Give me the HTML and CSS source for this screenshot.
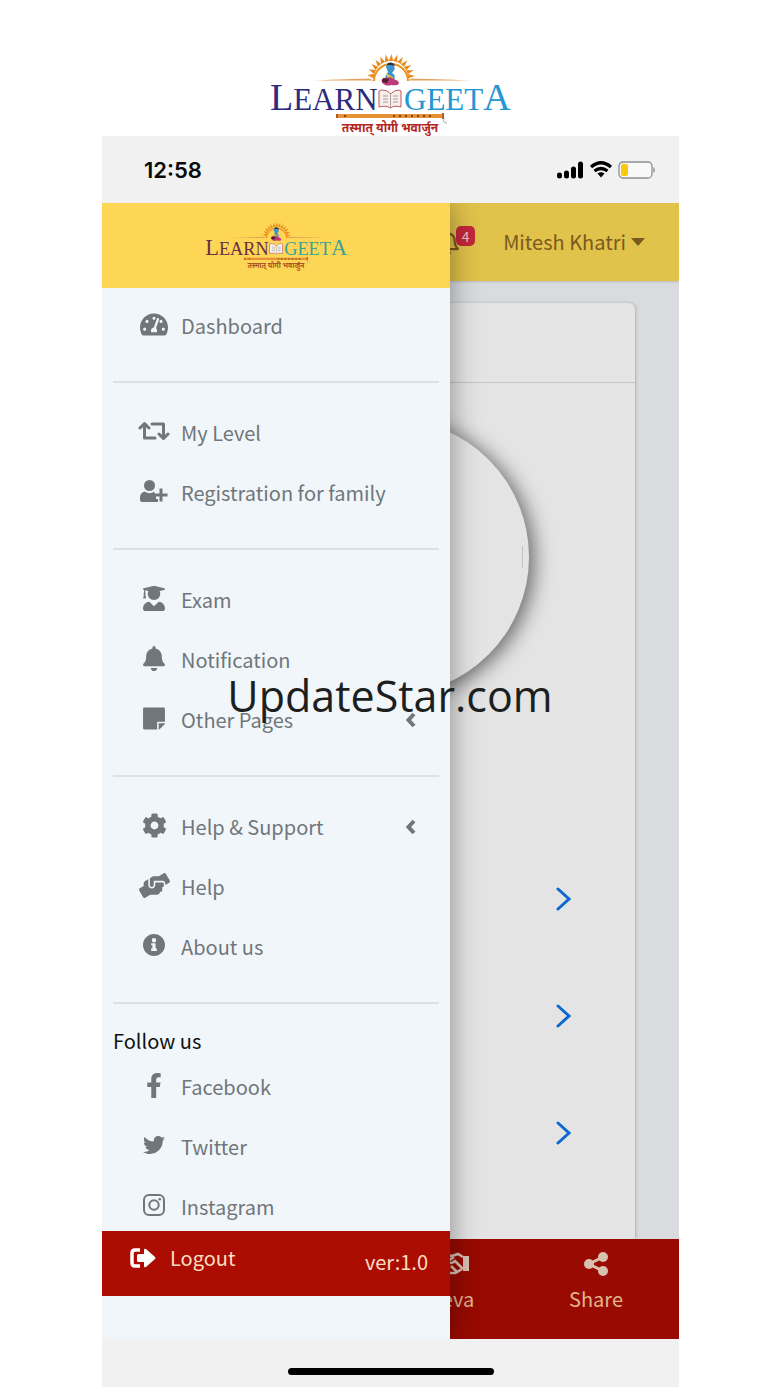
FILE: index.html
```html
<!DOCTYPE html>
<html lang="en">
<head>
<meta charset="utf-8">
<meta name="viewport" content="width=device-width, initial-scale=1">
<title>Learn Geeta</title>
<link rel="stylesheet" href="styles.css">
</head>
<body>
<svg class="defs" aria-hidden="true">
  <symbol id="logo" viewBox="0 0 260 95">
    <path d="M52 35.500Q90 34 109 33.500L114 35.500ZM214 35.500Q170 34 152 33.500L147 35.500Z" fill="#e5a05a"/>
    <g fill="#ea8a1e" transform="translate(131 33)">
      <path id="ray" d="M-2.200 -17L0.600 -24L2.200 -17Z"/>
      <use href="#ray" transform="rotate(-84)"/><use href="#ray" transform="rotate(-70)"/><use href="#ray" transform="rotate(-56)"/><use href="#ray" transform="rotate(-42)"/><use href="#ray" transform="rotate(-28)"/><use href="#ray" transform="rotate(-14)"/>
      <use href="#ray" transform="rotate(14)"/><use href="#ray" transform="rotate(28)"/><use href="#ray" transform="rotate(42)"/><use href="#ray" transform="rotate(56)"/><use href="#ray" transform="rotate(70)"/><use href="#ray" transform="rotate(84)"/>
      <path d="M-17 3A17 17 0 1 1 17 3" fill="none" stroke="#ee931f" stroke-width="2"/>
    </g>
    <path d="M126 22C126 18 132 17 134 21C136 25 133 26 132 28C136 30 135 34 133 37H125C124 32 127 29 128 27Z" fill="#3f93c9"/>
    <path d="M127 20C128 16 134 17 135 21L131 20Z" fill="#252f49"/>
    <path d="M126 28L134 33L128 35Z" fill="#e6c93f"/>
    <path d="M122 34L130 32L138 36C141 40 136 41 131 40C126 42 120 38 122 34Z" fill="#bf3a7a"/>
    <path d="M123 33L129 34L127 38L122 37Z" fill="#521d2d"/>
    <path d="M119 46L121 45Q128 45 130.500 49Q134 45 139 45L141 46V62Q134 60 130.500 63Q126 60 119 62Z" fill="#f5f1ea" stroke="#c25562" stroke-width="1"/>
    <path d="M130.500 49V62M123 51H128M123 54H128M123 57H128M133 51H138M133 54H138M133 57H138" stroke="#a99b9b" stroke-width="1"/>
    <text class="logo-learn" x="10" y="65"><tspan class="logo-big">L</tspan>EARN</text>
    <text class="logo-geeta" x="144" y="65">GEET<tspan class="logo-big">A</tspan></text>
    <path d="M76 69H184V73H76Z" fill="#e79335"/>
    <path d="M76 69H78V73H76ZM182 68H184V74H182Z" fill="#a65c22"/>
    <path d="M84 71H86M133 71H174" stroke="#81451e" stroke-width="2" stroke-dasharray="2 4"/>
    <path d="M184 73Q182 78 187 78" fill="none" stroke="#aaa" stroke-width="1"/>
    <text class="logo-tag" x="130" y="87" text-anchor="middle">तस्मात् योगी भवार्जुन</text>
  </symbol>
</svg>

<div class="page">
  <header class="masthead">
    <svg class="logo logo-main" role="img" aria-label="Learn Geeta"><use href="#logo"/></svg>
  </header>

  <div class="phone">
    <div class="status">
      <span class="clock">12:58</span>
      <span class="signals">
        <svg width="27" height="18" viewBox="0 0 27 18"><path d="M2.500 14V15M9.500 12V15M16.500 8V15M23.500 3V15" stroke="#000" stroke-width="5" stroke-linecap="round"/></svg>
        <svg width="22" height="17" viewBox="0 0 22 17" fill="none" stroke="#000" stroke-width="3.300"><path d="M1 6Q11-2.500 21 6M4.500 10Q11 5 17.500 10"/><path d="M7.500 12.500Q11 10 14.500 12.500L11 16.500Z" fill="#000" stroke="none"/></svg>
        <svg width="38" height="18" viewBox="0 0 38 18"><rect x="1" y="1" width="33" height="16" rx="4" fill="#f8f8f8" stroke="#8f8f93" stroke-width="1.300"/><rect x="3" y="3" width="7" height="12" rx="2" fill="#f8c90d"/><path d="M35.500 6Q38 9 35.500 12Z" fill="#77777b"/></svg>
      </span>
    </div>

    <div class="stage">
      <main class="app">
        <div class="topbar">
          <button class="alerts" aria-label="Notifications">
            <svg width="22" height="25" viewBox="0 0 448 512" fill="currentColor"><path d="M439.400 362.300c-19.300-20.800-55.500-52-55.500-154.300 0-77.700-54.500-139.900-127.900-155.200V32a32 32 0 1 0-64 0v20.800C118.600 68.100 64.100 130.300 64.100 208c0 102.300-36.200 133.500-55.500 154.300C2.600 368.700 0 376.400 0 384c.1 16.400 13 32 32.100 32h383.800c19.100 0 32-15.600 32.100-32 0-7.600-2.600-15.300-8.600-21.700zM67.500 368c21.200-28 44.400-74.300 44.500-159.400V208c0-61.900 50.100-112 112-112s112 50.100 112 112v.6c.1 85.100 23.300 131.500 44.500 159.400H67.500zM224 512c35.300 0 64-28.700 64-64H160c0 35.300 28.600 64 64 64z"/></svg>
            <span class="badge">4</span>
          </button>
          <button class="user">Mitesh Khatri <span class="caret"></span></button>
        </div>
        <section class="card">
          <div class="card-head"></div>
          <div class="disc"><span class="disc-mark"></span></div>
          <a class="row" href="#" aria-label="Open"><svg width="16" height="24" viewBox="0 0 16 24"><path d="M2 2L13 12L2 22"/></svg></a>
          <a class="row" href="#" aria-label="Open"><svg width="16" height="24" viewBox="0 0 16 24"><path d="M2 2L13 12L2 22"/></svg></a>
          <a class="row" href="#" aria-label="Open"><svg width="16" height="24" viewBox="0 0 16 24"><path d="M2 2L13 12L2 22"/></svg></a>
        </section>
        <nav class="tabs">
          <a class="tab" href="#"><svg width="34" height="24" viewBox="0 0 34 24" fill="none" stroke="currentColor" stroke-width="2.600"><path d="M1 3H6V18H1M6 5L12 3L17 4L23 2L28 5M19 5L13 9Q15 13 20 9L28 17M6 17L14 21H20L23 19M16 14L22 20L27 17"/><path d="M28 4H34V19H28Z" fill="currentColor" stroke="none"/></svg><span>Seva</span></a>
          <a class="tab" href="#"><svg width="24" height="24" viewBox="0 0 24 24"><path d="M19 5L5 12L19 19" fill="none" stroke="currentColor" stroke-width="3"/><g fill="currentColor"><circle cx="19" cy="5" r="5"/><circle cx="5" cy="12" r="5"/><circle cx="19" cy="19" r="5"/></g></svg><span>Share</span></a>
        </nav>
      </main>

      <aside class="drawer">
        <div class="brand"><svg class="logo logo-small" role="img" aria-label="Learn Geeta"><use href="#logo"/></svg></div>
        <nav class="menu">
          <ul class="group">
            <li><a class="item" href="#"><span class="ico"><svg width="28" height="25" viewBox="0 0 576 512"><path fill-rule="evenodd" d="M288 32C128.900 32 0 160.900 0 320c0 52.800 14.300 102.300 39 144.800 5.600 9.600 16.300 15.200 27.400 15.200h443.200c11.100 0 21.800-5.600 27.400-15.200 24.700-42.500 39-92 39-144.800 0-159.100-128.900-288-288-288zm0 64a32 32 0 1 1 0 64 32 32 0 0 1 0-64zM96 384a32 32 0 1 1 0-64 32 32 0 0 1 0 64zm48-160a32 32 0 1 1 0-64 32 32 0 0 1 0 64zm246.800-72.400l-61.300 184c13.300 11.500 22.500 27.600 22.500 46.400 0 12-4 22-9 34H233c-5-10-9-22-9-34 0-34.300 27.200-62 61.200-63.700l61.300-182c4.200-12.600 17.800-19.400 30.400-15.200s18.100 17.900 13.900 30.500zM432 160a32 32 0 1 1 0 64 32 32 0 0 1 0-64zm48 224a32 32 0 1 1 0-64 32 32 0 0 1 0 64z"/></svg></span>Dashboard</a></li>
          </ul>
          <ul class="group">
            <li><a class="item" href="#"><span class="ico"><svg width="32" height="20" viewBox="0 0 32 20" fill="none" stroke="currentColor" stroke-width="3" stroke-linecap="round" stroke-linejoin="round"><path d="M2 7L6.500 2.500L11 7M6.500 3V17H17M21 13L25.500 17.500L30 13M25.500 17V3H14"/></svg></span>My Level</a></li>
            <li><a class="item" href="#"><span class="ico"><svg width="28" height="23" viewBox="0 0 28 23"><circle cx="9.500" cy="5.500" r="5.500"/><path d="M4.500 11.500Q9.500 15 14.500 11.500V15H16V19H18V22H2Q0 22 0 20V17Q0 13 4.500 11.500ZM19.500 8.500H22.500V13.500H27.500V16.500H22.500V21.500H19.500V16.500H14.500V13.500H19.500Z"/></svg></span>Registration for family</a></li>
          </ul>
          <ul class="group">
            <li><a class="item" href="#"><span class="ico"><svg width="22" height="25" viewBox="0 0 448 512"><path d="M319.400 320.600L224 416l-95.400-95.400C57.100 323.700 0 382.200 0 454.400v9.600c0 26.500 21.500 48 48 48h352c26.500 0 48-21.500 48-48v-9.600c0-72.200-57.100-130.700-128.600-133.800zM13.600 79.800l6.400 1.500v58.400c-7 4.200-12 11.500-12 20.300 0 8.400 4.600 15.400 11.100 19.700L3.500 242c-1.700 6.900 2.100 14 7.600 14h41.800c5.500 0 9.300-7.100 7.600-14l-15.600-62.300C51.400 175.400 56 168.400 56 160c0-8.800-5-16.100-12-20.300V87.100l66 15.900c-8.600 17.200-14 36.400-14 57 0 70.700 57.300 128 128 128s128-57.300 128-128c0-20.600-5.300-39.800-14-57l96.300-23.200c18.200-4.400 18.200-27.100 0-31.500l-190.400-46c-13-3.100-26.700-3.100-39.700 0L13.600 48.200c-18.100 4.400-18.100 27.200 0 31.600z"/></svg></span>Exam</a></li>
            <li><a class="item" href="#"><span class="ico"><svg width="22" height="25" viewBox="0 0 448 512"><path d="M224 512c35.300 0 64-28.700 64-64H160c0 35.300 28.600 64 64 64zm215.400-149.700c-19.300-20.800-55.500-52-55.500-154.300 0-77.700-54.500-139.900-127.900-155.200V32a32 32 0 1 0-64 0v20.800C118.600 68.100 64.100 130.300 64.100 208c0 102.300-36.200 133.500-55.500 154.300C2.600 368.700 0 376.400 0 384c.1 16.400 13 32 32.100 32h383.800c19.100 0 32-15.600 32.100-32 0-7.600-2.600-15.300-8.600-21.700z"/></svg></span>Notification</a></li>
            <li><a class="item" href="#"><span class="ico"><svg width="22" height="25" viewBox="0 0 448 512"><path d="M312 320h136V56c0-13.300-10.700-24-24-24H24C10.700 32 0 42.700 0 56v400c0 13.300 10.700 24 24 24h264V344c0-13.200 10.800-24 24-24zm129 55l-98 98c-4.500 4.500-10.600 7-17 7h-6V352h128v6.100c0 6.300-2.500 12.400-7 16.900z"/></svg></span>Other Pages<svg class="more" width="10" height="16" viewBox="0 0 10 16"><path d="M8 2L2.500 8L8 14"/></svg></a></li>
          </ul>
          <ul class="group">
            <li><a class="item" href="#"><span class="ico"><svg width="25" height="25" viewBox="0 0 512 512"><path d="M487.400 315.700l-42.600-24.600c4.300-23.200 4.300-47 0-70.200l42.600-24.600c4.900-2.800 7.100-8.600 5.500-14-11.100-35.600-30-67.800-54.700-94.600-3.800-4.100-10-5.100-14.800-2.300L380.800 110c-17.900-15.400-38.500-27.300-60.800-35.100V25.800c0-5.600-3.900-10.500-9.400-11.700-36.700-8.200-74.300-7.800-109.200 0-5.500 1.200-9.400 6.100-9.400 11.700V75c-22.200 7.900-42.800 19.800-60.800 35.100L88.700 85.500c-4.900-2.800-11-1.900-14.800 2.300-24.700 26.700-43.600 58.900-54.700 94.600-1.700 5.400.6 11.200 5.500 14L67.300 221c-4.300 23.200-4.300 47 0 70.200l-42.600 24.600c-4.900 2.800-7.100 8.600-5.500 14 11.100 35.600 30 67.800 54.700 94.600 3.800 4.100 10 5.100 14.800 2.300l42.600-24.600c17.900 15.400 38.500 27.300 60.800 35.100v49.200c0 5.600 3.900 10.500 9.400 11.700 36.700 8.200 74.300 7.800 109.200 0 5.500-1.200 9.400-6.100 9.400-11.700v-49.200c22.200-7.900 42.800-19.800 60.800-35.100l42.600 24.600c4.900 2.800 11 1.900 14.800-2.300 24.700-26.700 43.600-58.900 54.700-94.600 1.500-5.500-.7-11.300-5.600-14.100zM256 336c-44.100 0-80-35.900-80-80s35.900-80 80-80 80 35.900 80 80-35.900 80-80 80z"/></svg></span>Help &amp; Support<svg class="more" width="10" height="16" viewBox="0 0 10 16"><path d="M8 2L2.500 8L8 14"/></svg></a></li>
            <li><a class="item" href="#"><span class="ico"><svg width="31" height="25" viewBox="0 0 640 512"><path d="M488 192H336v56c0 39.700-32.300 72-72 72s-72-32.300-72-72V126.400l-64.900 39C107.800 176.900 96 197.800 96 220.200v47.300l-80 46.200C.7 322.500-4.600 342.100 4.300 357.400l80 138.600c8.800 15.300 28.400 20.500 43.700 11.700L231.400 448H368c35.300 0 64-28.700 64-64h16c17.700 0 32-14.300 32-32v-64h8c13.300 0 24-10.700 24-24v-48c0-13.300-10.700-24-24-24zm147.700-37.400L555.700 16C546.900.7 527.300-4.500 512 4.300L408.600 64H306.400c-12 0-23.700 3.400-33.900 9.700L239 94.600c-9.400 5.800-15 16.100-15 27.100V248c0 22.100 17.900 40 40 40s40-17.900 40-40v-88h184c30.900 0 56 25.100 56 56v28.500l80-46.200c15.300-8.900 20.500-28.400 11.700-43.700z"/></svg></span>Help</a></li>
            <li><a class="item" href="#"><span class="ico"><svg width="22" height="22" viewBox="8 8 496 496"><path d="M256 8C119 8 8 119 8 256s111 248 248 248 248-111 248-248S393 8 256 8zm0 90a50 50 0 1 1 0 100 50 50 0 0 1 0-100zm64 280c0 6.600-5.400 12-12 12H204c-6.600 0-12-5.400-12-12v-34c0-6.600 5.400-12 12-12h16V264h-16c-6.600 0-12-5.400-12-12v-24c0-6.600 5.400-12 12-12h76c6.600 0 12 5.400 12 12v104h16c6.600 0 12 5.400 12 12z"/></svg></span>About us</a></li>
          </ul>
          <h2 class="follow">Follow us</h2>
          <ul class="group group-social">
            <li><a class="item" href="#"><span class="ico"><svg width="16" height="25" viewBox="0 0 320 512"><path d="M279.100 288l14.200-92.700h-88.900v-60.100c0-25.300 12.400-50.100 52.200-50.100H297V6.300S260.400 0 225.400 0c-73.200 0-121.100 44.400-121.100 124.700v70.600H22.900V288h81.400v224h100.200V288z"/></svg></span>Facebook</a></li>
            <li><a class="item" href="#"><span class="ico"><svg width="22" height="22" viewBox="0 0 512 512"><path d="M459.400 151.700c.3 4.500.3 9.100.3 13.600 0 138.700-105.600 298.600-298.600 298.600-59.500 0-114.700-17.200-161.100-47.100 8.400 1 16.600 1.300 25.300 1.300 49.100 0 94.200-16.600 130.300-44.800-46.100-1-84.800-31.200-98.100-72.800 6.500 1 13 1.600 19.800 1.600 9.400 0 18.800-1.300 27.600-3.600-48.100-9.700-84.100-52-84.100-103v-1.300c14 7.800 30.200 12.700 47.400 13.300-28.300-18.800-46.800-51-46.800-87.400 0-19.500 5.200-37.400 14.300-53 51.700 63.700 129.300 105.300 216.400 109.800-1.600-7.800-2.600-15.900-2.600-24 0-57.800 46.800-104.900 104.900-104.900 30.200 0 57.500 12.700 76.700 33.100 23.700-4.500 46.500-13.300 66.600-25.300-7.800 24.400-24.400 44.800-46.100 57.800 21.100-2.300 41.600-8.100 60.400-16.200-14.300 20.800-32.200 39.300-52.600 54.300z"/></svg></span>Twitter</a></li>
            <li><a class="item" href="#"><span class="ico"><svg width="22" height="22" viewBox="0 0 22 22" fill="none" stroke="currentColor" stroke-width="2"><rect x="1" y="1" width="20" height="20" rx="5"/><circle cx="11" cy="11" r="4.700"/><circle cx="16.800" cy="5.300" r="1.300" fill="currentColor" stroke="none"/></svg></span>Instagram</a></li>
          </ul>
        </nav>
        <div class="session">
          <a class="logout" href="#"><svg width="26" height="20" viewBox="0 0 26 20"><path d="M10 2H5Q2 2 2 5V15Q2 18 5 18H10" fill="none" stroke="currentColor" stroke-width="3.500"/><path d="M7 7.500Q7 6 8.500 6H14V2Q14 0 16 1L25 9Q26 10 25 11L16 19Q14 20 14 18V14H8.500Q7 14 7 12.500Z" fill="currentColor"/></svg>Logout</a>
          <span class="version">ver:1.0</span>
        </div>
      </aside>
    </div>

    <div class="homebar"><span class="home-pill"></span></div>
  </div>
  <div class="watermark">UpdateStar.com</div>
</div>
</body>
</html>
```
FILE: styles.css
```css
* { box-sizing: border-box; }
body {
  margin: 0;
  background: #fff;
  color: #70767b;
  font: 20px/28px "Noto Sans CJK SC", "Noto Sans", sans-serif;
}
a { color: inherit; text-decoration: none; }
button { border: 0; padding: 0; background: none; color: inherit; font: inherit; }
ul { list-style: none; margin: 0; padding: 0; }
svg { display: block; flex: none; }
.defs { position: absolute; width: 0; height: 0; }

.page { position: relative; padding: 0 101px 0 102px; }
.masthead { display: flex; justify-content: center; height: 136px; padding-top: 45px; }
.logo { color: #2e2a80; --geeta: #2496d2; --tag: #b3261e; }
.logo-main { width: 260px; height: 95px; margin-right: 1px; }
.logo-small { width: 154px; height: 56px; color: #6b3044; --geeta: #3ba394; --tag: #a8552a; }
.logo-learn, .logo-geeta { font: 31px "Liberation Serif", serif; fill: currentColor; }
.logo-geeta { fill: var(--geeta); }
.logo-big { font-size: 38px; }
.logo-tag { font: bold 12px "Noto Sans Devanagari", "Noto Sans", sans-serif; fill: var(--tag); }

.phone { position: relative; background: #f1f1f1; }
.status { display: flex; align-items: center; justify-content: space-between; height: 67px; padding: 0 23px 0 42px; }
.clock { color: #0a0a0a; font: 600 22px/28px Inter, sans-serif; }
.signals { display: flex; align-items: center; gap: 6px; }

.stage { display: grid; overflow: hidden; }
.app, .drawer { grid-area: 1 / 1; }
.app { display: flex; flex-direction: column; background: #d9dbde; }
.topbar { display: flex; align-items: center; justify-content: flex-end; gap: 28px; height: 78px; padding-right: 34px; background: #e1c24b; color: #7a5a1e; box-shadow: 0 1px 2px rgba(0, 0, 0, .15); }
.alerts { display: flex; }
.badge { display: flex; align-items: center; justify-content: center; width: 19px; height: 20px; margin: -4px 0 0 -3px; border-radius: 5px; background: #c4273b; color: #e7c3c0; font-size: 14px; line-height: 20px; }
.user { display: flex; align-items: center; gap: 5px; }
.caret { border: 7px solid transparent; border-top: 8px solid currentColor; border-bottom: 0; }

.card { flex: 1; margin: 22px 44px 0; border-radius: 6px 6px 0 0; background: #e4e4e4; box-shadow: 1px 0 3px rgba(0, 0, 0, .2); padding-bottom: 48px; }
.card-head { height: 80px; border-bottom: 1px solid #c4c4c4; }
.disc { display: flex; align-items: center; justify-content: flex-end; width: 276px; height: 276px; margin: 36px auto 145px; padding-right: 6px; border-radius: 50%; background: #e4e4e4; box-shadow: 5px 3px 20px rgba(0, 0, 0, .55); }
.disc-mark { width: 1px; height: 22px; background: #c2c2c2; }
.row { display: flex; align-items: center; justify-content: flex-end; height: 117px; padding-right: 63px; color: #0c68cf; }
.row path { fill: none; stroke: currentColor; stroke-width: 3; stroke-linecap: round; }

.tabs { display: flex; justify-content: flex-end; height: 100px; padding-right: 11px; background: #980a02; color: #e0b48c; }
.tab { display: flex; flex-direction: column; align-items: center; gap: 9px; width: 144px; padding-top: 13px; }
.tab svg { color: #d9bfb0; }

.drawer { display: flex; flex-direction: column; width: 348px; background: #f1f6fa; box-shadow: 0 0 28px rgba(0, 0, 0, .4); z-index: 1; }
.brand { display: flex; justify-content: center; height: 85px; padding-top: 14px; background: #fdd656; }
.menu { padding: 8px 11px 0; }
.group { padding-bottom: 25px; margin-bottom: 20px; border-bottom: 2px solid #dce1e5; }
.item { display: flex; align-items: center; height: 60px; padding: 0 23px 0 25px; }
.ico { display: flex; justify-content: center; width: 32px; margin-right: 11px; padding-bottom: 4px; }
.ico svg { fill: currentColor; }
.ico svg[fill="none"] { fill: none; }
.more { margin-left: auto; }
.more path { fill: none; stroke: currentColor; stroke-width: 4; }
.follow { margin: 0; color: #111; font-size: 20px; font-weight: 400; line-height: 33px; }
.group-social { margin: 0; padding: 0; border: 0; }
.session { display: flex; justify-content: space-between; height: 65px; margin-top: -6px; padding: 13px 22px 0 28px; background: #ac0d03; color: #fbdfc0; position: relative; }
.logout { display: flex; align-items: center; gap: 14px; height: 28px; }
.logout svg { color: #fff; }
.version { padding-top: 4px; }

.homebar { display: flex; align-items: flex-end; justify-content: center; height: 48px; padding-bottom: 12px; }
.home-pill { width: 206px; height: 7px; border-radius: 4px; background: #000; }

.watermark { position: absolute; top: 666px; left: 0; right: 0; z-index: 2; color: #1c1e20; font: 43px/60px "Open Sans", sans-serif; text-align: center; }
```
